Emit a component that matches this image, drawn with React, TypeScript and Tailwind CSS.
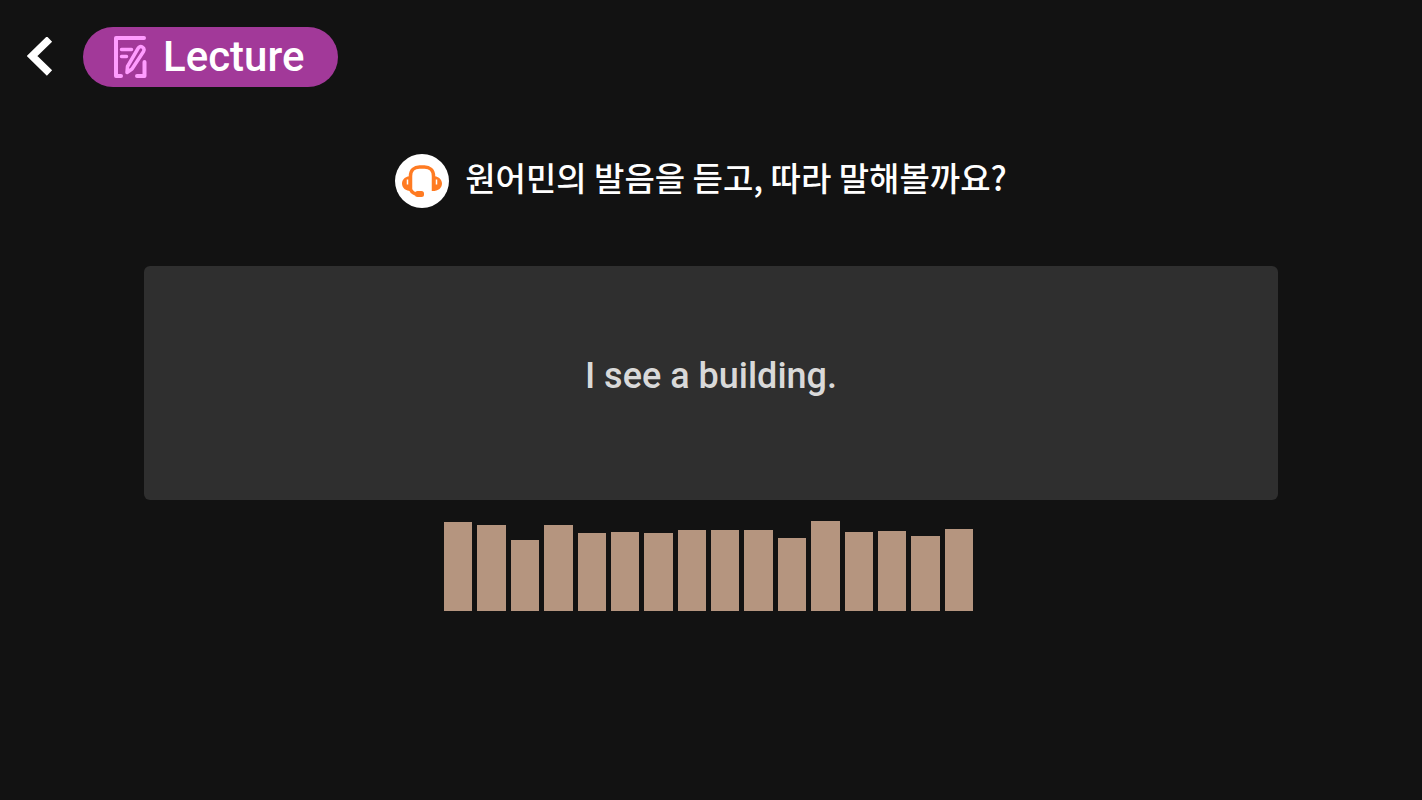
import React from 'react';

// bar heights of the voice level meter, in pixels
const levels = [89, 86, 71, 86, 78, 79, 78, 81, 81, 81, 73, 90, 79, 80, 75, 82];

function BackIcon() {
    return (
        <svg width="26" height="40" viewBox="0 0 26 40" fill="none" stroke="#ffffff" strokeWidth="7.500">
            <path d="M22.500 2 5 19l17.500 17" />
        </svg>
    );
}

function LectureIcon() {
    return (
        <svg width="34" height="44" viewBox="0 0 34 44" fill="none" stroke="#ff9cff" strokeWidth="4" strokeLinecap="round" strokeLinejoin="round">
            <path d="M31 3H3v38h5" />
            <path d="M31.500 27v14H24" />
            <path d="M8.500 14.500h10M8.500 21.500h5" strokeWidth="3.500" />
            <path d="M25 13.500 14.500 31.500l-.5 6 5-3.500L30.500 16.500c2-4-3.500-7-5.500-3Z" strokeWidth="3.500" />
        </svg>
    );
}

function HeadsetIcon() {
    return (
        <svg width="54" height="54" viewBox="0 0 54 54" className="shrink-0">
            <circle cx="27" cy="27" r="27" fill="#ffffff" />
            <g fill="#ff7b22">
                <path d="M16.500 22c-5.500 0-9.500 3-9.500 7.500s3.500 7.500 9.500 7.500ZM37.500 22c5.500 0 9.500 3 9.500 7.500s-3.500 7.500-9.500 7.500Z" />
                <rect x="20" y="37" width="9" height="6" rx="2.500" />
            </g>
            <path d="M15.500 37V22c0-6 4-9 9-9h5c5 0 9 3 9 9v15M15.500 35.500c1.500 3 3 4.500 7 4.500" fill="none" stroke="#ff7b22" strokeWidth="3.500" />
            <path d="M12.500 25.500v5M41.500 25.500v5" stroke="#ffffff" strokeWidth="1.500" />
        </svg>
    );
}

function App() {
    return (
        <div className="min-h-screen bg-[#121212] font-['Roboto','Noto_Sans_CJK_KR',sans-serif] font-medium text-white">
            <header className="flex items-center gap-[30px] px-[27px] pt-[27px]">
                <button type="button" aria-label="뒤로" className="flex shrink-0 cursor-pointer">
                    <BackIcon />
                </button>
                <h1 className="flex h-[60px] items-center gap-4 rounded-full bg-[#a23999] pr-[34px] pl-[30px] text-[42px] leading-none">
                    <LectureIcon />
                    Lecture
                </h1>
            </header>

            <main className="flex flex-col items-center px-36 pt-[67px]">
                <div className="flex items-start gap-4 pr-5 font-['Noto_Sans_CJK_KR',sans-serif]">
                    <HeadsetIcon />
                    <p className="text-[33px] leading-[46px]">원어민의 발음을 듣고, 따라 말해볼까요?</p>
                </div>

                <section className="mt-[58px] flex w-full justify-center rounded-md bg-[#2f2f2f] pt-[85px] pb-[99px]">
                    <p className="text-[36px] leading-[50px] text-[#d9d9d9]">I see a building.</p>
                </section>

                <div className="mt-[21px] flex w-[534px] items-end">
                    {levels.map((level, index) => (
                        <div key={index} className="mr-[5px] flex-1 bg-[#b5957f]" style={{ height: level }} />
                    ))}
                </div>
            </main>
        </div>
    );
}

export default App;
